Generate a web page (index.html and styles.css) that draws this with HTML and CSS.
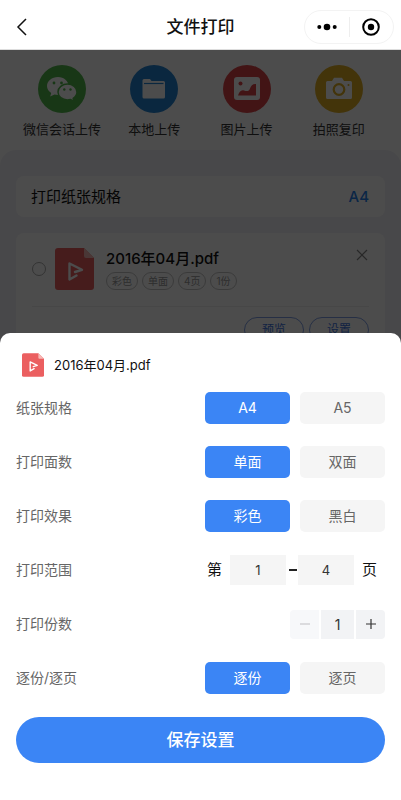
FILE: index.html
```html
<!DOCTYPE html>
<html lang="zh-CN">
<head>
<meta charset="utf-8">
<meta name="viewport" content="width=device-width, initial-scale=1">
<title>文件打印</title>
<link rel="stylesheet" href="styles.css">
</head>
<body>
<svg class="symbols" aria-hidden="true">
  <symbol id="pdf" viewBox="0 0 39 42">
    <path fill="#eb5f60" d="M3 0h26l10 10v29a3 3 0 0 1-3 3H3a3 3 0 0 1-3-3V3a3 3 0 0 1 3-3z"/>
    <path fill="#f8b9b6" d="M29 0l10 10h-8a2 2 0 0 1-2-2z"/>
    <path fill="none" stroke="#fff" stroke-width="2.4" stroke-linecap="round" stroke-linejoin="round" d="M21.500 27.500L14.500 31.500V15.500L27 21.800 20 24"/>
  </symbol>
</svg>
<header class="navbar">
  <button class="back" aria-label="返回"><svg width="12" height="18" viewBox="0 0 12 18"><path d="M10 1L2 9l8 8" fill="none" stroke="#111" stroke-width="1.5"/></svg></button>
  <h1 class="navbar-title">文件打印</h1>
  <div class="capsule">
    <button aria-label="更多"><svg width="20" height="8" viewBox="0 0 20 8"><circle cx="2.300" cy="4" r="2"/><circle cx="10" cy="4" r="3.300"/><circle cx="17.700" cy="4" r="2"/></svg></button>
    <button aria-label="关闭"><svg width="18" height="18" viewBox="0 0 18 18"><circle cx="9" cy="9" r="7.800" fill="none" stroke="#000" stroke-width="2"/><circle cx="9" cy="9" r="3.200"/></svg></button>
  </div>
</header>
<main class="page">
  <nav class="sources">
    <a class="source" href="#">
      <span class="disc disc-green"><svg width="32" height="28" viewBox="0 0 32 28">
        <path fill="#fff" d="M12 2C5.800 2 1 6 1 11c0 3 1.600 5.300 4.200 7l-1 3.500L8.500 19.500c1.200.3 2.300.4 3.500.4C18 19.900 22.500 16 22.500 11S18 2 12 2z"/>
        <path fill="#fff" stroke="#52b84c" stroke-width="1.500" d="M21.500 9c-5.300 0-9.500 3.500-9.500 8s4.200 8 9.500 8c1.100 0 2.100-.2 3.100-.5l3.500 1.900-.9-3.100c2.300-1.500 3.800-3.700 3.800-6.300 0-4.500-4.200-8-9.500-8z"/>
        <g fill="#52b84c"><circle cx="8" cy="8" r="1.400"/><circle cx="15.500" cy="8" r="1.400"/><circle cx="18.300" cy="14.500" r="1.200"/><circle cx="24.500" cy="14.500" r="1.200"/></g></svg></span>
      <span>微信会话上传</span>
    </a>
    <a class="source" href="#">
      <span class="disc disc-blue"><svg width="24" height="20" viewBox="0 0 24 20">
        <path fill="#fff" d="M2 0h6l1.500 2h12a1.500 1.500 0 0 1 1.500 1.500v14.500a1.500 1.500 0 0 1-1.500 1.500h-19.500a1.500 1.500 0 0 1-1.500-1.500v-16.500A1.500 1.500 0 0 1 2 0z"/><path stroke="#2283d2" stroke-width="1.200" d="M2 4.500h19.500"/></svg></span>
      <span>本地上传</span>
    </a>
    <a class="source" href="#">
      <span class="disc disc-red"><svg width="28" height="24" viewBox="0 0 28 24">
        <rect x="1" y="0" width="26" height="23" rx="3" fill="#fff"/><circle cx="7.500" cy="6.500" r="2" fill="#dd4548"/><path fill="#dd4548" d="M5 18.500c1-3.500 3-6 6-5 3 1 5 1 6-2 1-3 3-5 6-4.500v11.500z"/></svg></span>
      <span>图片上传</span>
    </a>
    <a class="source" href="#">
      <span class="disc disc-yellow"><svg width="28" height="24" viewBox="0 0 28 24">
        <path fill="#fff" d="M2.500 4H7l2-3.200h8L19 4h6.500A1.500 1.500 0 0 1 27 5.500v15a1.500 1.500 0 0 1-1.500 1.500h-23A1.500 1.500 0 0 1 1 20.500v-15A1.500 1.500 0 0 1 2.500 4z"/><circle cx="14" cy="12.500" r="5.300" fill="#fff" stroke="#e0ae22" stroke-width="2.200"/><circle cx="23.500" cy="8" r="1" fill="#e0ae22"/></svg></span>
      <span>拍照复印</span>
    </a>
  </nav>
  <div class="panel">
    <section class="card paper">
      <span>打印纸张规格</span>
      <span class="paper-value">A4</span>
    </section>
    <section class="card file">
      <div class="file-main">
        <input class="pick" type="checkbox" aria-label="选择文件">
        <svg class="file-icon" width="39" height="42"><use href="#pdf"/></svg>
        <div class="file-info">
          <h2 class="file-name">2016年04月.pdf</h2>
          <div class="tags"><span>彩色</span><span>单面</span><span>4页</span><span>1份</span></div>
        </div>
        <button class="remove" aria-label="删除"><svg width="14" height="14" viewBox="0 0 14 14"><path d="M2 2l10 10M12 2L2 12" stroke="#888" stroke-width="1.200"/></svg></button>
      </div>
      <div class="file-actions"><button>预览</button><button>设置</button></div>
    </section>
  </div>
  <div class="mask"></div>
</main>
<form class="sheet" role="dialog" aria-label="打印设置">
  <div class="sheet-head">
    <svg width="22" height="24"><use href="#pdf"/></svg>
    <span>2016年04月.pdf</span>
  </div>
  <div class="row"><span>纸张规格</span><div class="options" role="group" aria-label="纸张规格"><button type="button" aria-pressed="true">A4</button><button type="button" aria-pressed="false">A5</button></div></div>
  <div class="row"><span>打印面数</span><div class="options" role="group" aria-label="打印面数"><button type="button" aria-pressed="true">单面</button><button type="button" aria-pressed="false">双面</button></div></div>
  <div class="row"><span>打印效果</span><div class="options" role="group" aria-label="打印效果"><button type="button" aria-pressed="true">彩色</button><button type="button" aria-pressed="false">黑白</button></div></div>
  <div class="row"><span>打印范围</span><div class="range"><label for="from">第</label><input id="from" type="text" inputmode="numeric" value="1"><span class="dash"></span><input id="to" type="text" inputmode="numeric" value="4"><label for="to">页</label></div></div>
  <div class="row"><label for="copies">打印份数</label><div class="stepper">
    <button type="button" disabled aria-label="减少"><svg width="10" height="10" viewBox="0 0 10 10"><path d="M0 5h10" stroke="currentColor" stroke-width="1.200"/></svg></button>
    <input id="copies" type="text" inputmode="numeric" value="1">
    <button type="button" aria-label="增加"><svg width="10" height="10" viewBox="0 0 10 10"><path d="M0 5h10M5 0v10" stroke="currentColor" stroke-width="1.200"/></svg></button>
  </div></div>
  <div class="row"><span>逐份/逐页</span><div class="options" role="group" aria-label="逐份/逐页"><button type="button" aria-pressed="true">逐份</button><button type="button" aria-pressed="false">逐页</button></div></div>
  <button class="save" type="submit">保存设置</button>
</form>
</body>
</html>
```
FILE: styles.css
```css
* { box-sizing: border-box; }
body {
  margin: 0;
  min-height: 100vh;
  display: flex;
  flex-direction: column;
  background: #fff;
  color: #111;
  font: 14px/20px Inter, "Noto Sans CJK SC", sans-serif;
}
h1, h2 { margin: 0; font-weight: 500; }
button, input { margin: 0; padding: 0; border: 0; background: none; color: inherit; font: inherit; }
svg { display: block; flex: none; }
.symbols { display: none; }
a { color: inherit; text-decoration: none; }

/* Navigation bar */
.navbar {
  display: grid;
  grid-template-columns: 1fr auto 1fr;
  align-items: center;
  height: 50px;
  padding: 4px 7px 0;
  border-bottom: 1px solid #ddd;
}
.back { justify-self: start; padding: 0 9px; }
.navbar-title { font-size: 17px; line-height: 24px; }
.capsule {
  justify-self: end;
  display: flex;
  align-items: center;
  width: 90px;
  height: 34px;
  border: 1px solid #f3f3f3;
  border-radius: 17px;
}
.capsule button { flex: 1; height: 20px; display: grid; place-items: center; }
.capsule button + button { border-left: 1px solid #eee; }

/* Page behind the sheet */
.page { position: relative; flex: 1; display: flex; flex-direction: column; }
.sources { display: grid; grid-template-columns: repeat(4, 1fr); padding: 15px 16px 11px; }
.source { display: flex; flex-direction: column; align-items: center; gap: 6px; color: #333; font-size: 13px; white-space: nowrap; }
.disc { display: grid; place-items: center; width: 48px; height: 48px; border-radius: 50%; }
.disc-green { background: #52b84c; }
.disc-blue { background: #2283d2; }
.disc-red { background: #dd4548; }
.disc-yellow { background: #e0ae22; }
.panel {
  flex: 1;
  display: flex;
  flex-direction: column;
  gap: 16px;
  padding: 26px 16px;
  border-radius: 16px 16px 0 0;
  background: #f2f2f7;
}
.card { border-radius: 8px; background: #fff; }
.paper { display: flex; justify-content: space-between; align-items: center; height: 41px; padding: 0 16px 0 15px; font-size: 15px; }
.paper-value { color: #2580ec; font-weight: 500; }
.file { padding: 15px 16px; }
.file-main { display: flex; align-items: center; padding-bottom: 16px; border-bottom: 1px solid #eee; }
.pick { appearance: none; width: 14px; height: 14px; border: 1px solid #aaa; border-radius: 50%; }
.file-icon { margin: 0 12px 0 9px; }
.file-info { flex: 1; }
.file-name { font-size: 15px; line-height: 22px; }
.tags { display: flex; gap: 4px; margin-top: 2px; }
.tags span { height: 18px; padding: 0 5px; border: 1px solid #c4c4c4; border-radius: 9px; color: #999; font-size: 10px; line-height: 16px; }
.remove { align-self: flex-start; }
.file-actions { display: flex; justify-content: flex-end; gap: 5px; padding-top: 10px; }
.file-actions button { width: 60px; height: 26px; border: 1px solid #7f9fe6; border-radius: 13px; color: #3d74e0; font-size: 12px; line-height: 18px; }
.mask { position: absolute; inset: 0; background: rgba(0, 0, 0, .7); }

/* Print settings sheet */
.sheet {
  position: fixed;
  left: 0;
  right: 0;
  bottom: 0;
  display: flex;
  flex-direction: column;
  padding: 16px 16px 37px;
  border-radius: 10px 10px 0 0;
  background: #fff;
}
.sheet-head { display: flex; align-items: center; gap: 10px; height: 32px; padding-left: 6px; font-size: 13px; }
.row { display: flex; align-items: center; justify-content: space-between; height: 54px; color: #666; }
.options { display: flex; gap: 10px; }
.options button { width: 85px; height: 32px; border-radius: 5px; background: #f5f5f5; }
.options button[aria-pressed="true"] { background: #3b85f5; color: #fff; }
.range { display: flex; align-items: center; padding-right: 8px; color: #111; font-size: 15px; }
.range input { width: 56px; height: 30px; margin: 0 8px; background: #f5f5f5; color: #333; font-size: 13px; text-align: center; }
.range #from { margin-right: 3px; }
.range #to { margin-left: 1px; }
.dash { width: 8px; height: 2px; background: #222; }
.stepper { display: flex; gap: 2px; color: #333; }
.stepper button { display: grid; place-items: center; width: 29px; height: 29px; background: #f2f3f5; }
.stepper button:first-child { border-radius: 4px 0 0 4px; }
.stepper button:last-child { border-radius: 0 4px 4px 0; }
.stepper button:disabled { background: #f7f8fa; color: #c8c9cc; }
.stepper input { width: 33px; height: 29px; background: #f2f3f5; text-align: center; }
.save { height: 46px; margin-top: 12px; border-radius: 23px; background: #3b85f5; color: #fff; font-size: 17px; font-weight: 500; }
```
